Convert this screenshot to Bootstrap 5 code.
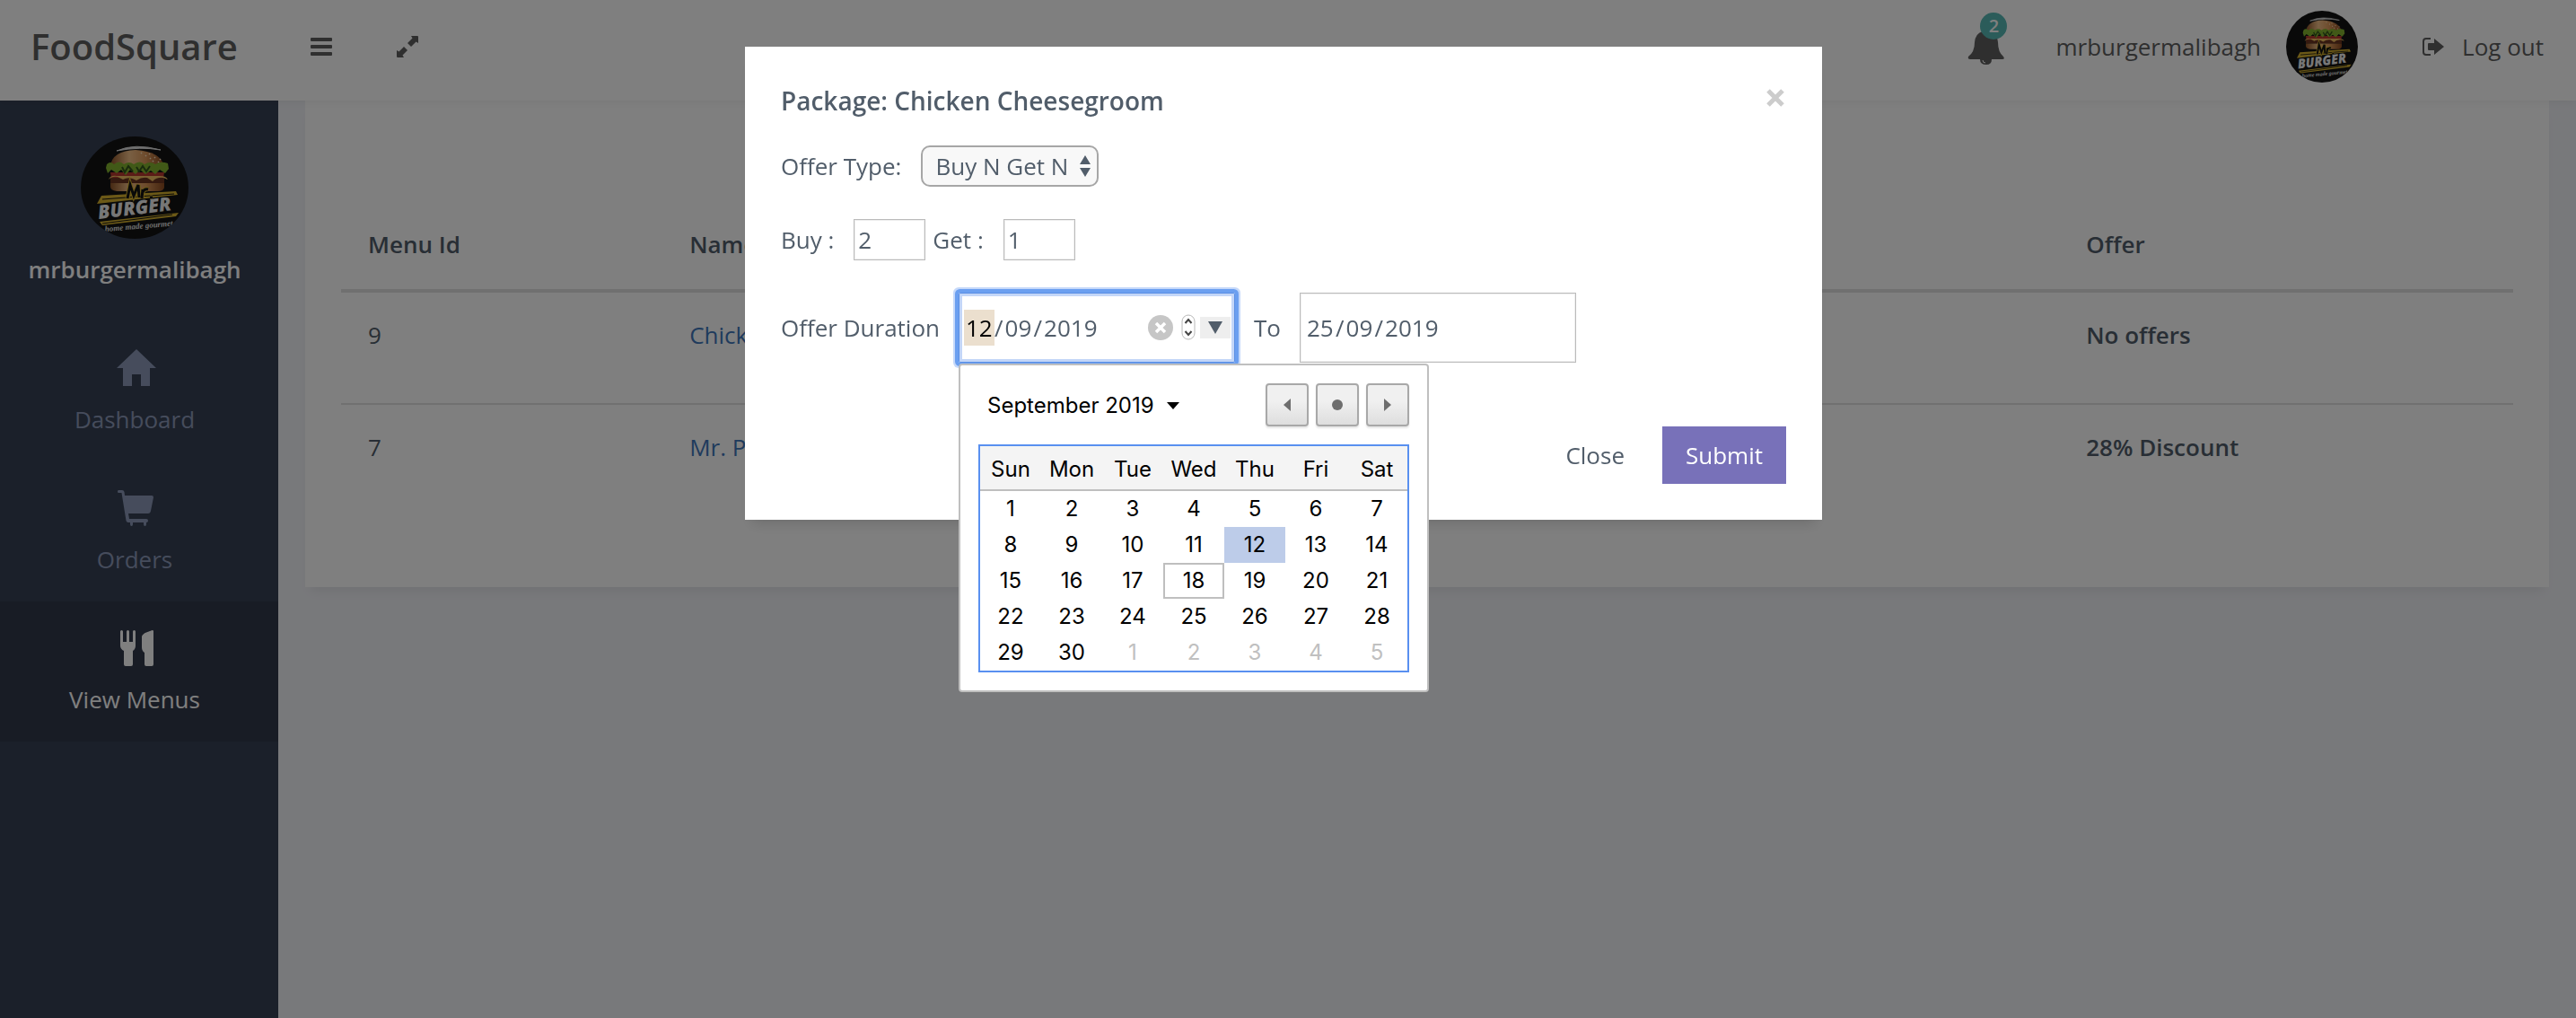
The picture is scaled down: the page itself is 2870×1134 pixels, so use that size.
<!DOCTYPE html>
<html lang="en">
<head>
<meta charset="utf-8">
<meta name="viewport" content="width=device-width, initial-scale=1">
<title>FoodSquare – View Menus</title>
<link href="https://cdn.jsdelivr.net/npm/bootstrap@5.3.0/dist/css/bootstrap.min.css" rel="stylesheet">
<style>
:root { --ink: #515d6a; --dark: #5e5e5e; }
body { font-family: "Open Sans", "Noto Sans", sans-serif; font-size: 26px; line-height: 40px; color: var(--ink); background: #f1f2f7; min-height: 100vh; overflow: hidden; }
a { color: inherit; text-decoration: none; }
svg { display: block; flex: none; }

.topbar { height: 112px; background: #fff; color: var(--dark); padding: 0 36px 0 34px; position: relative; z-index: 2; box-shadow: 0 2px 10px rgba(0,0,0,.06); }
.brand { font-size: 40px; font-weight: 600; line-height: 48px; margin-right: 81px; }
.topbar .inner { height: 104px; }
.icon-btn { border: 0; background: none; padding: 0; color: inherit; }
.expand { margin-left: 72px; }
.bell { position: relative; margin-right: 56px; }
.count { position: absolute; left: 14px; top: -18px; width: 30px; height: 30px; border-radius: 50%; background: #56b8b4; color: #fff; font-size: 20px; line-height: 30px; font-weight: 600; text-align: center; }
.account { gap: 28px; }
.logout { gap: 20px; margin-left: 72px; }

.shell { min-height: calc(100vh - 112px); }
.side { width: 310px; flex: none; background: #364155; color: #8c99b8; padding: 40px 10px 0 0; text-align: center; }
.side .owner { color: #fff; font-weight: 600; margin: 14px 0 38px; }
.side .item { display: flex; flex-direction: column; align-items: center; height: 156px; padding-top: 29px; gap: 16px; }
.side .item svg { margin-left: 4px; }
.side .item.on { background: #31384b; color: #fff; margin-right: -10px; padding-right: 10px; }

.main { padding: 0 30px; }
.panel-box { background: #fff; height: 542px; padding: 52px 40px; box-shadow: 0 10px 12px -6px rgba(0,0,0,.07); }
.menus { width: 100%; table-layout: fixed; }
.menus .c-id { width: 14.8%; }
.menus .c-name { width: 64.3%; }
.menus th { font-weight: 600; }
.menus th, .menus td { padding: 0 30px; vertical-align: top; }
.menus thead th { height: 160px; padding-top: 88px; border-bottom: 4px solid #e0e0e0; }
.menus tbody th, .menus tbody td { height: 126px; padding-top: 27px; }
.menus tbody tr + tr > * { border-top: 2px solid #e0e0e0; }
.menus a { color: #3e76ba; }

.modal.d-block { padding-right: 10px; }
.modal-dialog.offer { max-width: 1200px; margin-top: 52px; }
.offer .modal-content { border: 0; border-radius: 0; padding: 40px; color: var(--ink); box-shadow: 0 12px 14px -8px rgba(0,0,0,.14); }
.offer h5 { font-size: 28px; line-height: 40px; font-weight: 600; margin: 0; }
.offer label { flex: none; }
.x-btn { border: 0; background: none; padding: 0 2px 6px; color: #ccc; }
.row-kind { margin-top: 30px; gap: 22px; }
.row-qty { margin-top: 36px; gap: 8px; }
.row-qty label { margin-right: 14px; }
.row-date { margin-top: 36px; gap: 21px; }
.kind { position: relative; }
.kind select { appearance: none; width: 198px; height: 46px; border: 2px solid #a6a6a6; border-radius: 10px; background: #f8f8f8; color: var(--ink); padding: 0 14px; line-height: 40px; }
.kind svg { position: absolute; right: 9px; top: 11px; pointer-events: none; }
.qty { width: 80px; height: 46px; border: 1px solid #bbb; box-shadow: inset 0 0 0 1px #eee; padding: 0 4px; color: var(--ink); }
.date-box { width: 308px; height: 78px; border: 1px solid #bbb; box-shadow: inset 0 0 0 1px #eee; padding: 0 5px; position: relative; }
.date-box.live { border-color: #5b8fe4; box-shadow: inset 0 0 0 3px #c3d6f8, 0 0 0 4px #6b9ff0, 0 0 0 6px #c6d9fa; border-radius: 2px; }
.date-box input { width: 34px; height: 40px; border: 0; padding: 0 2px; background: none; color: inherit; outline: 0; }
.date-box .yr { width: 66px; }
.date-box input.sel { background: #ebdfce; color: #000; }
.drop { background: #eee; border: 0; padding: 5px 9px; height: 24px; margin-left: 5px; }
.clear { border: 0; background: none; padding: 0; margin-left: 52px; }
.spin { margin-left: 9px; }
.acts { margin-top: 71px; }
.acts .btn { font-size: 26px; line-height: 40px; border-radius: 0; border: 0; padding: 12px 26px; }
.acts .plain { color: var(--ink); }
.acts .go { background: #7871b9; color: #fff; }

.cal { position: absolute; left: -1px; top: 78px; width: 524px; border: 2px solid #bfbfbf; border-radius: 4px; background: #fff; padding: 20px; color: #000; font-family: Inter, "Liberation Sans", sans-serif; font-size: 24px; z-index: 5; }
.cal .month { border: 0; background: none; padding: 2px 10px 0; color: #000; gap: 14px; line-height: 40px; }
.cal .step { width: 48px; height: 48px; border: 2px solid #a8a8a8; border-radius: 4px; background: linear-gradient(#f0f0f0 40%, #dedede); box-shadow: 0 2px 2px rgba(0,0,0,.1); padding: 0; display: flex; align-items: center; justify-content: center; }
.cal table { width: 480px; table-layout: fixed; border-collapse: separate; border-spacing: 0; border: 2px solid #5990f0; margin-top: 20px; text-align: center; line-height: 36px; }
.cal th { font-weight: 400; height: 50px; background: #f4f4f4; border-bottom: 2px solid #bfbfbf; padding: 4px 0 0; }
.cal td { height: 40px; padding: 0; border: 2px solid transparent; }
.cal .pick { background: #bdcce9; border-color: #bdcce9; }
.cal .now { border-color: #bfbfbf; }
.cal .off { color: #c0c0c0; }
</style>
</head>
<body>
<header class="topbar">
  <div class="inner d-flex align-items-center">
    <a href="#" class="brand">FoodSquare</a>
    <button class="icon-btn" aria-label="Toggle menu"><svg width="24" height="20" fill="currentColor"><rect width="24" height="4" rx="1"/><rect y="8" width="24" height="4" rx="1"/><rect y="16" width="24" height="4" rx="1"/></svg></button>
    <button class="icon-btn expand" aria-label="Full screen"><svg width="24" height="24" fill="currentColor"><path d="M16 0H23Q24 0 24 1V8L21.500 6.500L16 12L12 8L17.500 2.500ZM8 24H1Q0 24 0 23V16L2.500 17.500L8 12L12 16L6.500 21.500Z"/></svg></button>
    <a href="#" class="bell ms-auto" aria-label="Notifications"><svg width="42" height="40" viewBox="0 0 42 40" fill="currentColor"><path d="M20 0Q23 0 23 3Q33 5 34 15Q34 26 40 31Q42 34 39 34H3Q0 34 1 31Q8 26 8 15Q9 5 17 3Q17 0 20 0ZM14 34H27Q27 40 21 40Q14 40 14 34Z"/><path d="M17 35Q17 38 20 38" fill="none" stroke="#fff" stroke-width="1"/></svg><span class="count">2</span></a>
    <a href="#" class="account d-flex align-items-center">mrburgermalibagh <svg width="80" height="80" viewBox="0 0 120 114" preserveAspectRatio="none"><use href="#logo"/></svg></a>
    <a href="#" class="logout d-flex align-items-center"><svg width="24" height="20" viewBox="0 0 24 20" fill="currentColor"><path d="M9 1H4Q1 1 1 4V16Q1 19 4 19H9" fill="none" stroke="currentColor" stroke-width="2"/><path d="M6 7Q6 6 7 6H13V1L24 10L13 19V14H7Q6 14 6 13Z"/></svg><span>Log out</span></a>
  </div>
</header>

<div class="shell d-flex">
  <nav class="side">
    <svg class="mx-auto" width="120" height="114" viewBox="0 0 120 114">
      <clipPath id="disc"><ellipse cx="60" cy="57" rx="60" ry="57"/></clipPath>
      <linearGradient id="bun" x1="0" x2="1"><stop offset="0" stop-color="#8c5226"/><stop offset=".35" stop-color="#f2bf87"/><stop offset=".65" stop-color="#dc985a"/><stop offset="1" stop-color="#8a4a20"/></linearGradient>
      <g id="logo" clip-path="url(#disc)">
        <rect width="120" height="114" fill="#131313"/>
        <path d="M40 16Q60 7 89 15Q66 11 40 16Z" fill="#ddd" stroke="#ddd"/>
        <path d="M33 33Q35 16 61 15Q90 17 93 34Z" fill="url(#bun)"/>
        <path d="M76 19l1 1M82 23l1 1M86 28l1 1M80 27l1 1M72 21l1 1M77 24l1 1M67 18l1 1M88 25l1 1" stroke="#ffe9c8" stroke-width="1.5"/>
        <path d="M33 40H93L92 47H34Z" fill="#b6392e"/>
        <path d="M29 31Q33 27 37 31Q43 26 48 31Q54 27 59 31Q66 26 71 31Q77 27 83 31Q89 27 97 30L98 36L94 41L88 37L83 42L78 38L72 42L66 37L61 42L55 37L50 43L45 37L40 41L34 37L30 41L28 35Z" fill="#82b32f"/>
        <path d="M46 34l3 6 4-7 5 6M62 34l3 5 4-6 4 6 4-6" fill="none" stroke="#33561a" stroke-width="2"/>
        <path d="M33 46H93V52H33Z" fill="#6b3420"/>
        <path d="M31 48Q33 43 40 44H88Q95 44 97 48L92 46Q85 45 80 50L74 46Q68 45 62 49Q54 44 47 48L41 45Q35 44 31 48Z" fill="#f0be62"/>
        <path d="M33 52H93V57Q92 61 86 61H40Q33 60 33 56Z" fill="url(#bun)"/>
        <path d="M23 66L106 61L108 65L18 75Z" fill="#d8b32e"/>
        <path d="M24 70L104 64" stroke="#131313" stroke-width="1.2"/>
        <path d="M52 69L55 54L59 66L64 54L65 68M68 69L69 59M69 62Q71 58 75 59M77 68h3" fill="none" stroke="#d8b32e" stroke-width="5"/>
        <path d="M52 69L55 54L59 66L64 54L65 68M68 69L69 59M69 62Q71 58 75 59M77 68h3" fill="none" stroke="#131313" stroke-width="3"/>
        <path d="M21 95L109 85L106 89L24 99Z" fill="#d8b32e"/>
        <path d="M24 97L102 87" stroke="#131313"/>
        <text transform="rotate(-7 20 91)" x="20" y="92" font-family="Open Sans, sans-serif" font-weight="800" font-style="italic" font-size="21" fill="#eee">BURGER</text>
        <text transform="rotate(-5 28 105)" x="27" y="106" font-family="Liberation Serif, serif" font-style="italic" font-weight="700" font-size="9" fill="#ddd">home made gourmet</text>
      </g>
    </svg>
    <div class="owner">mrburgermalibagh</div>
    <a href="#" class="item"><svg width="44" height="44" viewBox="0 0 44 44" fill="currentColor"><path d="M22 2L44 23H37V43H27V30H17V43H7V23H0Z"/></svg>Dashboard</a>
    <a href="#" class="item"><svg width="44" height="44" viewBox="0 0 44 44" fill="currentColor"><path fill-rule="evenodd" d="M2 3H6Q8 3 8.500 5L9 9H39Q41 9 41 11L38 26Q37.500 29 35 29H13L14 35H33Q35 35 35 37Q35 39 33 39V41Q33 43 31.500 43Q30 43 30 41V39H18V41Q18 43 16.500 43Q15 43 15 41V39H13Q11 39 10.500 37L5.500 6H2Q1 6 1 4.500Q1 3 2 3Z"/></svg>Orders</a>
    <a href="#" class="item on"><svg width="44" height="44" viewBox="0 0 44 44" fill="currentColor"><path d="M4 4.500Q4 3 5.500 3T7 4.500V16H11V4.500Q11 3 12.500 3T14 4.500V16H18V4.500Q18 3 19.500 3T21 4.500V20Q21 24 18 26V41Q18 43 16 43H10Q8 43 8 41V26Q4 24 4 20ZM28 10Q29 7 33 5.500L39 3.200Q41 2.500 41 4.500V41Q41 43 39 43H33Q31 43 31 41V28Q28 26 28 22Z"/></svg>View Menus</a>
  </nav>
  <main class="main flex-fill">
    <section class="panel-box">
      <table class="menus">
        <colgroup><col class="c-id"><col class="c-name"><col></colgroup>
        <thead><tr><th>Menu Id</th><th>Name</th><th>Offer</th></tr></thead>
        <tbody>
          <tr><td>9</td><td><a href="#">Chicken</a></td><th>No offers</th></tr>
          <tr><td>7</td><td><a href="#">Mr. Pizza</a></td><th>28% Discount</th></tr>
        </tbody>
      </table>
    </section>
  </main>
</div>

<div class="modal-backdrop show"></div>
<div class="modal d-block" role="dialog" aria-labelledby="offerTitle">
  <div class="modal-dialog offer">
    <form class="modal-content">
      <div class="d-flex justify-content-between align-items-center">
        <h5 id="offerTitle">Package: Chicken Cheesegroom</h5>
        <button type="button" class="x-btn" aria-label="Close dialog"><svg width="20" height="20" stroke="currentColor" stroke-width="5"><path d="M2 2L18 18M18 2L2 18"/></svg></button>
      </div>
      <div class="row-kind d-flex align-items-center">
        <label for="kind">Offer Type:</label>
        <div class="kind"><select id="kind"><option>Buy N Get N</option></select><svg width="12" height="24" fill="currentColor"><path d="M6 0L12 10H0ZM6 24L12 14H0Z"/></svg></div>
      </div>
      <div class="row-qty d-flex align-items-center">
        <label for="buy">Buy :</label><input id="buy" class="qty" value="2">
        <label for="get">Get :</label><input id="get" class="qty" value="1">
      </div>
      <div class="row-date d-flex align-items-center">
        <label for="fromDay">Offer Duration</label>
        <div class="date-box live d-flex align-items-center">
          <input id="fromDay" class="sel" value="12"><span>/</span><input aria-label="From month" value="09"><span>/</span><input class="yr" aria-label="From year" value="2019">
          <button type="button" class="clear" aria-label="Clear"><svg width="28" height="28"><circle cx="14" cy="14" r="14" fill="#c6c6c6"/><path d="M9 9L19 19M19 9L9 19" stroke="#fff" stroke-width="3.500"/></svg></button>
          <svg class="spin" width="16" height="30" fill="none"><rect x="1" y="1" width="14" height="27" rx="7" fill="#fff" stroke="#b8b8b8"/><path d="M4.500 10L8 6L11.500 10M4.500 19L8 23L11.500 19" stroke="#444" stroke-width="2"/></svg>
          <button type="button" class="drop" aria-label="Open calendar"><svg width="16" height="14" fill="#515d6a"><path d="M0 0H16L8 14Z"/></svg></button>
          <div class="cal">
            <div class="d-flex align-items-center gap-2">
              <button type="button" class="month d-flex align-items-center me-auto">September 2019 <svg width="14" height="8"><path d="M0 0H14L7 8Z"/></svg></button>
              <button type="button" class="step" aria-label="Previous month"><svg width="8" height="14" fill="#6e6e6e"><path d="M8 0V14L0 7Z"/></svg></button>
              <button type="button" class="step" aria-label="Today"><svg width="12" height="12" fill="#6e6e6e"><circle cx="6" cy="6" r="6"/></svg></button>
              <button type="button" class="step" aria-label="Next month"><svg width="8" height="14" fill="#6e6e6e"><path d="M0 0V14L8 7Z"/></svg></button>
            </div>
            <table>
              <thead><tr><th>Sun</th><th>Mon</th><th>Tue</th><th>Wed</th><th>Thu</th><th>Fri</th><th>Sat</th></tr></thead>
              <tbody>
                <tr><td>1</td><td>2</td><td>3</td><td>4</td><td>5</td><td>6</td><td>7</td></tr>
                <tr><td>8</td><td>9</td><td>10</td><td>11</td><td class="pick">12</td><td>13</td><td>14</td></tr>
                <tr><td>15</td><td>16</td><td>17</td><td class="now">18</td><td>19</td><td>20</td><td>21</td></tr>
                <tr><td>22</td><td>23</td><td>24</td><td>25</td><td>26</td><td>27</td><td>28</td></tr>
                <tr><td>29</td><td>30</td><td class="off">1</td><td class="off">2</td><td class="off">3</td><td class="off">4</td><td class="off">5</td></tr>
              </tbody>
            </table>
          </div>
        </div>
        <label for="toDay">To</label>
        <div class="date-box d-flex align-items-center">
          <input id="toDay" value="25"><span>/</span><input aria-label="To month" value="09"><span>/</span><input class="yr" aria-label="To year" value="2019">
        </div>
      </div>
      <div class="acts d-flex justify-content-end">
        <button type="button" class="btn plain me-3">Close</button><button type="submit" class="btn go">Submit</button>
      </div>
    </form>
  </div>
</div>
<script src="https://cdn.jsdelivr.net/npm/bootstrap@5.3.0/dist/js/bootstrap.bundle.min.js"></script>
</body>
</html>
